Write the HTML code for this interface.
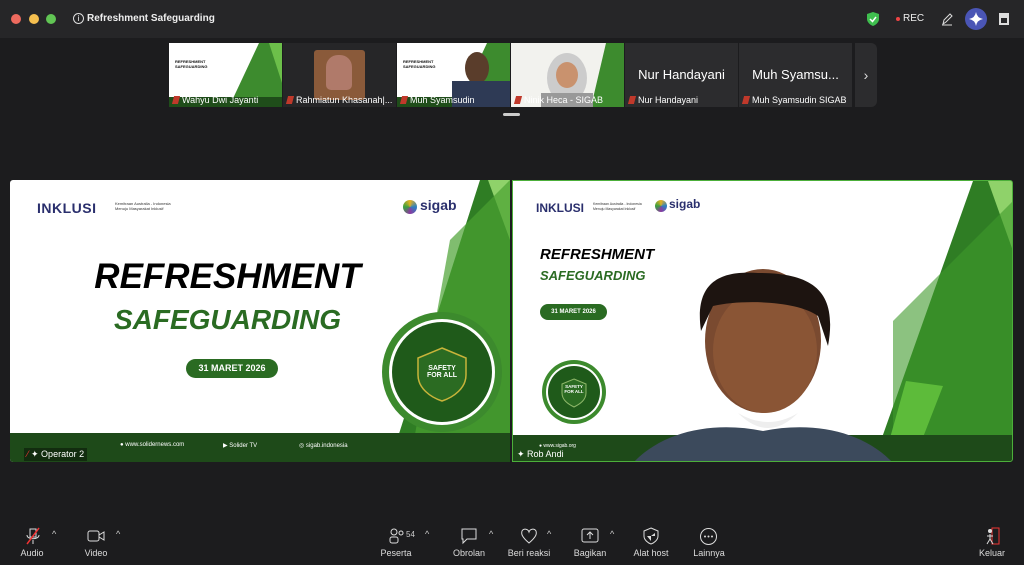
<!DOCTYPE html>
<html><head><meta charset="utf-8"><style>
*{margin:0;padding:0;box-sizing:border-box}
body{width:1024px;height:565px;background:#1c1c1e;font-family:"Liberation Sans",sans-serif;color:#fff;position:relative;overflow:hidden}
.top{position:absolute;left:0;top:0;width:1024px;height:38px;background:#262628}
.dot{position:absolute;top:14px;width:10px;height:10px;border-radius:50%}
.abs{position:absolute}
.thumb{position:absolute;top:43px;width:113px;height:64px;background:#2c2c2e;overflow:hidden}
.tn{position:absolute;left:4px;bottom:2px;font-size:9px;color:#fff;white-space:nowrap}
.tn:before{content:"";display:inline-block;width:6px;height:8px;background:#c0392b;margin-right:3px;vertical-align:-1px;transform:skewX(-15deg)}
.tile{position:absolute;top:180px;height:282px;background:#fff;overflow:hidden}
.ic{position:absolute;font-size:9px;color:#ddd;text-align:center;width:60px;top:548px}
.ico{position:absolute;top:527px}
</style></head><body>
<div class="top"></div>
<div class="dot" style="left:11px;background:#ed6a5e"></div>
<div class="dot" style="left:29px;background:#f5bf4f"></div>
<div class="dot" style="left:46px;background:#61c554"></div>
<div class="abs" style="left:73px;top:13px;width:11px;height:11px;border:1px solid #ddd;border-radius:50%;font-size:8px;text-align:center;line-height:9px">i</div>
<div class="abs" style="left:87px;top:13px;font-size:10px;font-weight:bold;color:#eee">Refreshment Safeguarding</div>
<svg class="abs" style="left:867px;top:12px" width="12" height="14"><path d="M6 0L12 2V7C12 10 9 13 6 14C3 13 0 10 0 7V2Z" fill="#3fbf4f"/><path d="M3 7L5.5 9.5L9 5" stroke="#fff" fill="none" stroke-width="1.5"/></svg>
<div class="abs" style="left:896px;top:17px;width:4px;height:4px;border-radius:50%;background:#e44"></div>
<div class="abs" style="left:903px;top:13px;font-size:10px;color:#eee">REC</div>
<svg class="abs" style="left:941px;top:12px" width="12" height="14"><path d="M2 12L3 8L9 2L11 4L5 10Z M1 13H11" stroke="#ddd" fill="none"/></svg>
<div class="abs" style="left:965px;top:8px;width:22px;height:22px;border-radius:50%;background:#4a55b5"><svg width="22" height="22"><path d="M11 4Q12 10 18 11Q12 12 11 18Q10 12 4 11Q10 10 11 4Z" fill="#fff"/></svg></div>
<div class="abs" style="left:999px;top:13px;width:10px;height:12px;border:2px solid #ddd;border-top-width:5px"></div>

<div class="thumb" style="left:169px;background:#fff"><svg width="113" height="64" class="abs"><polygon points="90,0 113,0 113,64 60,64" fill="#3d8b2e"/><polygon points="100,0 113,0 113,40" fill="#6cbf4a"/><rect x="0" y="54" width="113" height="10" fill="#1f4d1a"/></svg><div class="abs" style="left:6px;top:16px;font-size:4px;color:#111;font-weight:bold">REFRESHMENT<br>SAFEGUARDING</div><div class="tn">Wahyu Dwi Jayanti</div></div>
<div class="thumb" style="left:283px;background:#262628"><div class="abs" style="left:31px;top:7px;width:51px;height:50px;background:#8a5a3a;border-radius:3px"></div><div class="abs" style="left:43px;top:12px;width:26px;height:35px;background:#b07a6a;border-radius:12px 12px 5px 5px"></div><div class="tn">Rahmiatun Khasanah|...</div></div>
<div class="thumb" style="left:397px;background:#fff"><svg width="113" height="64" class="abs"><polygon points="90,0 113,0 113,64 60,64" fill="#3d8b2e"/><rect x="0" y="54" width="113" height="10" fill="#1f4d1a"/><ellipse cx="80" cy="25" rx="12" ry="16" fill="#5a3d2b"/><rect x="55" y="38" width="58" height="26" fill="#2e3a55"/></svg><div class="abs" style="left:6px;top:16px;font-size:4px;color:#111;font-weight:bold">REFRESHMENT<br>SAFEGUARDING</div><div class="tn">Muh Syamsudin</div></div>
<div class="thumb" style="left:511px;background:#f2f2ee"><svg width="113" height="64" class="abs"><polygon points="95,0 113,0 113,64 80,64" fill="#3d8b2e"/><ellipse cx="56" cy="35" rx="20" ry="25" fill="#ccc"/><ellipse cx="56" cy="32" rx="11" ry="13" fill="#c9926e"/><rect x="30" y="50" width="52" height="14" fill="#999"/></svg><div class="tn">Ninik Heca - SIGAB</div></div>
<div class="thumb" style="left:625px"><div class="abs" style="left:0;width:113px;top:24px;text-align:center;font-size:13px">Nur Handayani</div><div class="tn">Nur Handayani</div></div>
<div class="thumb" style="left:739px"><div class="abs" style="left:0;width:113px;top:24px;text-align:center;font-size:13px">Muh Syamsu...</div><div class="tn">Muh Syamsudin SIGAB</div></div>
<div class="abs" style="left:855px;top:43px;width:22px;height:64px;background:#2c2c2e;border-radius:0 6px 6px 0;font-size:14px;text-align:center;line-height:64px;color:#ddd">›</div>
<div class="abs" style="left:503px;top:113px;width:17px;height:3px;background:#ccc;border-radius:2px"></div>

<div class="tile" style="left:10px;width:500px;border-radius:3px 0 0 3px">
<svg class="abs" width="500" height="282"><polygon points="470,0 500,0 500,282 380,282" fill="#2f7d24"/><polygon points="478,0 500,0 500,60" fill="#8fd26a"/><polygon points="440,60 500,0 500,282 400,282" fill="#4aa132" opacity=".7"/><rect x="0" y="253" width="500" height="29" fill="#1e4a19"/><circle cx="432" cy="192" r="60" fill="#3c8a2d"/><circle cx="432" cy="192" r="53" fill="#fff"/><circle cx="432" cy="192" r="50" fill="#1f5a1a"/><path d="M432 168L456 178V195C456 208 444 217 432 221C420 217 408 208 408 195V178Z" fill="#2b6b22" stroke="#c8b43a" stroke-width="1.5"/></svg>
<div class="abs" style="left:27px;top:20px;font-size:14px;font-weight:bold;color:#2a2f6d;letter-spacing:.5px">INKLUSI</div>
<div class="abs" style="left:105px;top:21px;font-size:4px;color:#333;line-height:5px">Kemitraan Australia - Indonesia<br>Menuju Masyarakat Inklusif</div>
<div class="abs" style="left:393px;top:20px;width:14px;height:14px;border-radius:50%;background:conic-gradient(#e4b020,#2a80c0,#8a3aa0,#3aa040,#e4b020)"></div>
<div class="abs" style="left:410px;top:17px;font-size:14px;font-weight:bold;color:#2a2f6d">sigab</div>
<div class="abs" style="left:0;width:435px;top:77px;text-align:center;font-size:35px;font-weight:bold;font-style:italic;color:#000">REFRESHMENT</div>
<div class="abs" style="left:0;width:435px;top:124px;text-align:center;font-size:28px;font-weight:bold;font-style:italic;color:#2a6b22">SAFEGUARDING</div>
<div class="abs" style="left:176px;top:179px;width:92px;height:19px;border-radius:10px;background:#2a6b22;font-size:9px;font-weight:bold;text-align:center;line-height:19px">31 MARET 2026</div>
<div class="abs" style="left:408px;top:185px;width:48px;text-align:center;font-size:7px;font-weight:bold">SAFETY<br>FOR ALL</div>
<div class="abs" style="left:110px;top:262px;font-size:6px">● www.solidernews.com</div>
<div class="abs" style="left:213px;top:262px;font-size:6px">▶ Solider TV</div>
<div class="abs" style="left:289px;top:262px;font-size:6px">◎ sigab.indonesia</div>
<div class="abs" style="left:14px;top:268px;font-size:9px;background:rgba(0,0,0,.4);padding:1px 3px"><span style="color:#e33">⁄</span> ✦ Operator 2</div>
</div>

<div class="tile" style="left:512px;width:501px;border:1px solid #4caf3a;border-radius:0 3px 3px 0">
<svg class="abs" width="501" height="282"><polygon points="460,0 500,0 500,282 360,282" fill="#2f7d24"/><polygon points="475,0 500,0 500,70" fill="#8fd26a"/><polygon points="380,140 500,20 500,282 380,282" fill="#3f9a2c" opacity=".6"/><polygon points="393,200 430,205 400,282 370,282" fill="#5dbb3a"/><rect x="0" y="254" width="501" height="28" fill="#1e4a19"/><circle cx="61" cy="211" r="32" fill="#3c8a2d"/><circle cx="61" cy="211" r="28" fill="#fff"/><circle cx="61" cy="211" r="26" fill="#1f5a1a"/><path d="M61 198L73 203V212C73 219 67 223 61 226C55 223 49 219 49 212V203Z" fill="#2b6b22" stroke="#8fb86a"/><path d="M120 282C150 250 200 240 250 250C300 240 350 250 380 282Z" fill="#3c4a5c"/><ellipse cx="250" cy="160" rx="58" ry="72" fill="#7a4a30"/><ellipse cx="252" cy="170" rx="52" ry="62" fill="#8a5535"/><path d="M188 150C180 95 215 90 245 92C300 92 325 110 315 165L305 135C285 120 230 118 200 125Z" fill="#1d1410"/><path d="M225 232Q255 250 285 232Q255 262 225 232Z" fill="#eee"/></svg>
<div class="abs" style="left:23px;top:20px;font-size:12px;font-weight:bold;color:#2a2f6d">INKLUSI</div>
<div class="abs" style="left:80px;top:21px;font-size:3.5px;color:#333;line-height:4.5px">Kemitraan Australia - Indonesia<br>Menuju Masyarakat Inklusif</div>
<div class="abs" style="left:142px;top:19px;width:12px;height:12px;border-radius:50%;background:conic-gradient(#e4b020,#2a80c0,#8a3aa0,#3aa040,#e4b020)"></div>
<div class="abs" style="left:156px;top:16px;font-size:12px;font-weight:bold;color:#2a2f6d">sigab</div>
<div class="abs" style="left:27px;top:65px;font-size:15px;font-weight:bold;font-style:italic;color:#000">REFRESHMENT</div>
<div class="abs" style="left:27px;top:87px;font-size:13px;font-weight:bold;font-style:italic;color:#2a6b22">SAFEGUARDING</div>
<div class="abs" style="left:27px;top:123px;width:67px;height:16px;border-radius:8px;background:#2a6b22;font-size:6px;font-weight:bold;text-align:center;line-height:16px">31 MARET 2026</div>
<div class="abs" style="left:45px;top:203px;width:32px;text-align:center;font-size:4.5px;font-weight:bold">SAFETY<br>FOR ALL</div>
<div class="abs" style="left:26px;top:262px;font-size:5px">● www.sigab.org</div>
<div class="abs" style="left:4px;top:268px;font-size:9px">✦ Rob Andi</div>
</div>

<svg class="ico" style="left:24px" width="18" height="18"><path d="M6 2H12V10H6Z M3 8C3 13 15 13 15 8 M9 13V17" stroke="#ddd" fill="none"/><path d="M3 17L15 1" stroke="#e33" stroke-width="1.5"/></svg>
<div class="abs" style="left:52px;top:529px;font-size:9px;color:#ccc">^</div>
<div class="ic" style="left:2px">Audio</div>
<svg class="ico" style="left:87px;top:529px" width="18" height="14"><rect x="1" y="2" width="11" height="10" rx="2" stroke="#ddd" fill="none"/><path d="M12 6L17 3V11L12 8" stroke="#ddd" fill="none"/></svg>
<div class="abs" style="left:116px;top:529px;font-size:9px;color:#ccc">^</div>
<div class="ic" style="left:66px">Video</div>
<svg class="ico" style="left:388px" width="18" height="18"><circle cx="6" cy="5" r="3" stroke="#ddd" fill="none"/><rect x="2" y="10" width="8" height="6" rx="2" stroke="#ddd" fill="none"/><circle cx="13" cy="6" r="2" stroke="#ddd" fill="none"/></svg>
<div class="abs" style="left:406px;top:530px;font-size:8px;color:#ccc">54</div>
<div class="abs" style="left:425px;top:529px;font-size:9px;color:#ccc">^</div>
<div class="ic" style="left:366px">Peserta</div>
<svg class="ico" style="left:460px" width="18" height="18"><path d="M2 2H16V12H7L3 16V12H2Z" stroke="#ddd" fill="none"/></svg>
<div class="abs" style="left:489px;top:529px;font-size:9px;color:#ccc">^</div>
<div class="ic" style="left:439px">Obrolan</div>
<svg class="ico" style="left:520px" width="18" height="18"><path d="M9 16C2 10 1 7 2 4C4 1 8 2 9 5C10 2 14 1 16 4C17 7 16 10 9 16Z" stroke="#ddd" fill="none"/></svg>
<div class="abs" style="left:547px;top:529px;font-size:9px;color:#ccc">^</div>
<div class="ic" style="left:499px">Beri reaksi</div>
<svg class="ico" style="left:581px" width="18" height="18"><rect x="1" y="2" width="16" height="13" rx="2" stroke="#ddd" fill="none"/><path d="M9 12V5M6 8L9 5L12 8" stroke="#ddd" fill="none"/></svg>
<div class="abs" style="left:610px;top:529px;font-size:9px;color:#ccc">^</div>
<div class="ic" style="left:560px">Bagikan</div>
<svg class="ico" style="left:643px" width="16" height="18"><path d="M8 1L15 4V9C15 13 11 16 8 17C5 16 1 13 1 9V4Z" stroke="#ddd" fill="none"/><path d="M8 4V14L4 9H8L12 6V9H8" fill="#ddd"/></svg>
<div class="ic" style="left:621px">Alat host</div>
<svg class="ico" style="left:699px" width="19" height="19"><circle cx="9.5" cy="9.5" r="8" stroke="#ddd" fill="none"/><circle cx="6" cy="9.5" r="1" fill="#ddd"/><circle cx="9.5" cy="9.5" r="1" fill="#ddd"/><circle cx="13" cy="9.5" r="1" fill="#ddd"/></svg>
<div class="ic" style="left:679px">Lainnya</div>
<svg class="ico" style="left:983px" width="18" height="18"><rect x="9" y="1" width="7" height="16" stroke="#e33" fill="none"/><circle cx="7" cy="4" r="2" fill="#ddd"/><path d="M7 7V12L4 17M7 12L10 17M4 9L10 9" stroke="#ddd" fill="none"/></svg>
<div class="ic" style="left:962px">Keluar</div>
</body></html>
